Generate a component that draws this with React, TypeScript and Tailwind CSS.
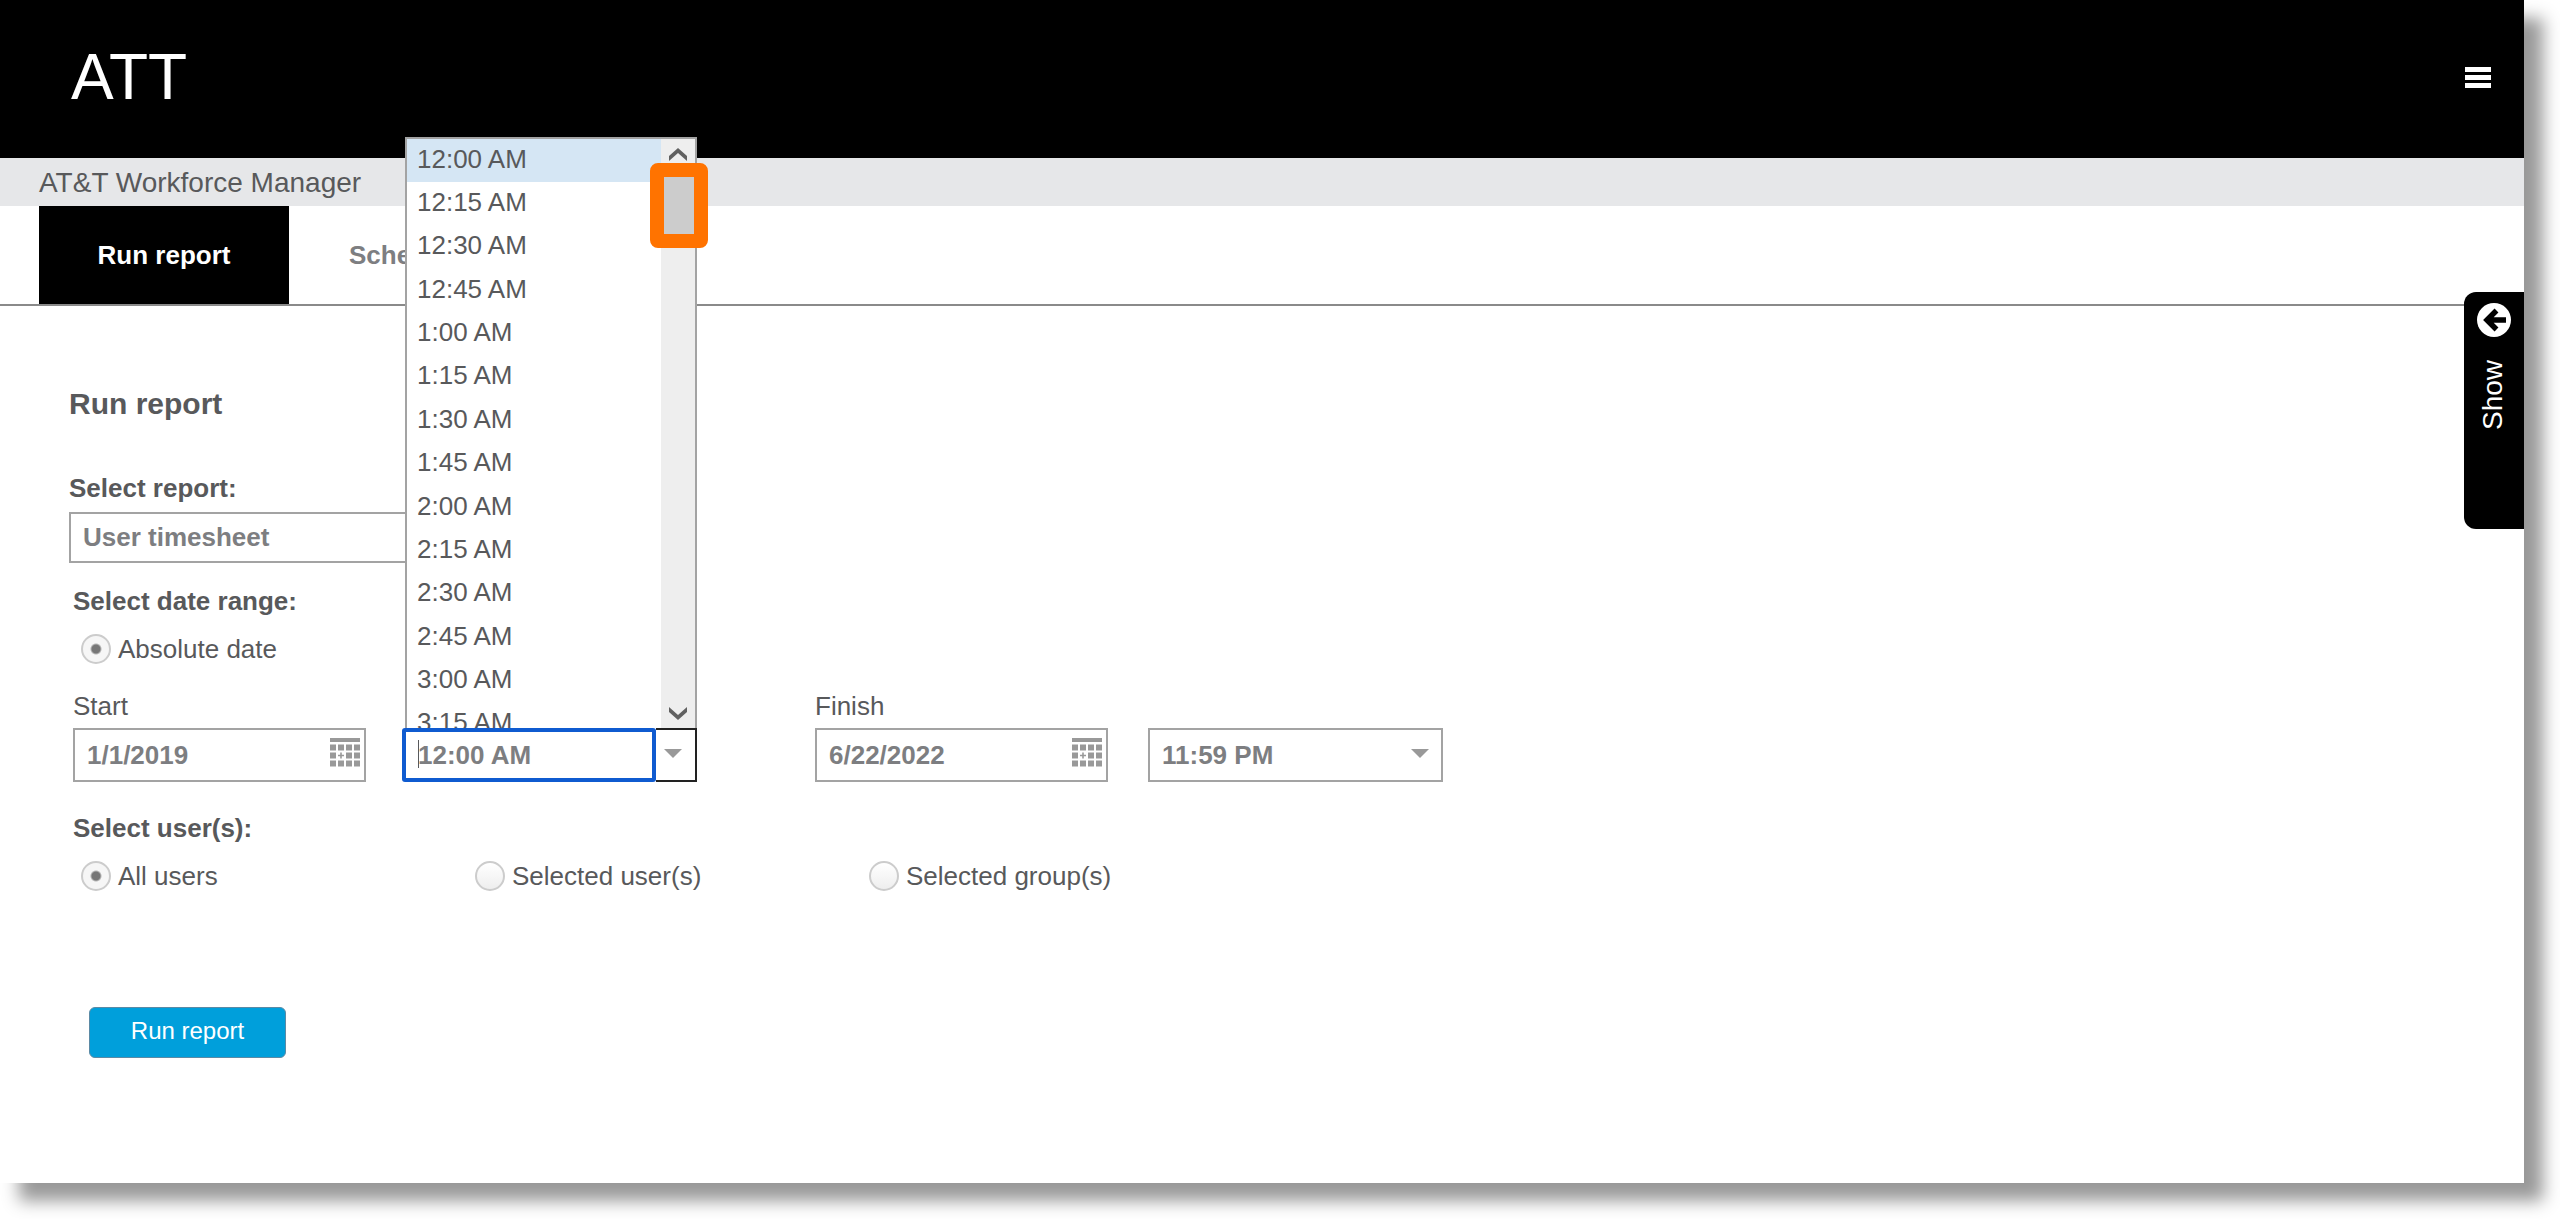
import React from "react";

const times = [
  "12:00 AM", "12:15 AM", "12:30 AM", "12:45 AM",
  "1:00 AM", "1:15 AM", "1:30 AM", "1:45 AM",
  "2:00 AM", "2:15 AM", "2:30 AM", "2:45 AM",
  "3:00 AM", "3:15 AM",
];

function CalendarIcon() {
  const cells = [];
  for (let r = 0; r < 3; r++) {
    for (let c = 0; c < 4; c++) {
      if (r === 1 && c === 1) continue;
      cells.push(<rect key={`${r}-${c}`} x={c * 8} y={6.5 + r * 8} width={6} height={6} />);
    }
  }
  return (
    <svg width="30" height="29" viewBox="0 0 30 29" fill="#999999" aria-hidden="true">
      <rect x="0" y="0" width="30" height="4" />
      {cells}
      <path d="M10.2 14.5h1.6v2.2H14v1.6h-2.2v2.2h-1.6v-2.2H8v-1.6h2.2z" />
    </svg>
  );
}

function Caret() {
  return (
    <svg width="18" height="9" viewBox="0 0 18 9" fill="#999999" aria-hidden="true">
      <path d="M0 0h18L9 9z" />
    </svg>
  );
}

function Chevron({ down = false }: { down?: boolean }) {
  return (
    <svg width="18" height="13" viewBox="0 0 18 13" fill="#606060" aria-hidden="true">
      <path d={down ? "M0 0l9 8 9-8v5l-9 8-9-8z" : "M0 13l9-8 9 8V8L9 0 0 8z"} />
    </svg>
  );
}

function DateField({ id, label, value }: { id: string; label: string; value: string }) {
  return (
    <div className="w-[293px]">
      <label htmlFor={id} className="block h-[38px] leading-8">{label}</label>
      <div className="flex h-[54px] items-center border-2 border-[#a3a3a3] bg-white pr-1">
        <input id={id} defaultValue={value} className="min-w-0 flex-1 pl-3 font-bold text-[#7d7e81] outline-none" />
        <button type="button" aria-label={`Choose ${label.toLowerCase()} date`} className="pb-[6px]">
          <CalendarIcon />
        </button>
      </div>
    </div>
  );
}

function Radio({ name, label, checked = false }: { name: string; label: string; checked?: boolean }) {
  return (
    <label className="flex w-[394px] items-center gap-[7px] leading-8">
      <input
        type="radio"
        name={name}
        defaultChecked={checked}
        className="size-[30px] appearance-none rounded-full border-2 border-[#cccccc] bg-linear-to-b from-white to-[#eeeeee] checked:bg-[radial-gradient(circle,#777777_0,#777777_4px,#f6f6f6_6px)]"
      />
      {label}
    </label>
  );
}

function TimeList() {
  return (
    <div className="absolute bottom-full left-[3px] z-10 flex h-[591px] w-[292px] overflow-hidden border-x-2 border-t-2 border-[#a3a3a3] bg-white">
      <ul role="listbox" aria-label="Start time options" className="flex h-[607px] flex-1 flex-col">
        {times.map((t, i) => (
          <li
            key={t}
            role="option"
            aria-selected={i === 0}
            className="flex flex-1 items-center pb-[3px] pl-[10px] aria-selected:bg-[#d5e6f4]"
          >
            {t}
          </li>
        ))}
      </ul>
      <div className="flex w-[34px] flex-col items-center justify-between bg-[#eeeeee] pt-[9px] pb-2">
        <Chevron />
        <Chevron down />
      </div>
    </div>
  );
}

export default function App() {
  return (
    <div className="h-screen overflow-hidden bg-white font-['Liberation_Sans',Arial,sans-serif] text-[26px] text-[#58595b]">
      <div className="relative mr-9 min-h-[calc(100vh-36px)] bg-white shadow-[19px_18px_16px_#999999]">
        <header className="flex h-[158px] items-center justify-between bg-black pr-[33px] pb-1 pl-[71px] text-white">
          <h1 className="text-[64px] leading-[72px]">ATT</h1>
          <button type="button" aria-label="Menu" className="flex w-[26px] flex-col gap-[3px]">
            <span className="h-[5px] bg-white" />
            <span className="h-[5px] bg-white" />
            <span className="h-[5px] bg-white" />
          </button>
        </header>
        <div className="flex h-12 items-center bg-[#e6e7e9] pt-[2px] pl-[39px] text-[28px]">AT&amp;T Workforce Manager</div>
        <nav className="flex h-[100px] border-b-2 border-[#8a8a8a] pl-[39px] font-bold">
          <button type="button" className="w-[250px] bg-black text-white">Run report</button>
          <button type="button" className="pl-[60px] text-[#7d7e81]">Schedule report</button>
        </nav>

        <aside className="absolute top-[292px] right-0 h-[237px] w-[60px]">
          <button type="button" className="flex h-full w-full flex-col items-center gap-[23px] rounded-l-xl bg-black pt-[11px] text-[28px] text-white">
            <svg width="34" height="34" viewBox="0 0 34 34" aria-hidden="true">
              <circle cx="17" cy="17" r="17" fill="white" />
              <path d="M29 17H11M19.500 7.500L10 17l9.500 9.500" fill="none" stroke="black" strokeWidth="5.500" />
            </svg>
            <span className="mr-[3px] rotate-180 leading-8 [writing-mode:vertical-rl]">Show</span>
          </button>
        </aside>

        <form className="pl-[73px]" onSubmit={(e) => e.preventDefault()}>
          <div className="-ml-1 pt-[78px]">
            <h2 className="text-[30px] leading-10 font-bold">Run report</h2>
            <label htmlFor="report" className="mt-12 block leading-8 font-bold">Select report:</label>
            <input
              id="report"
              defaultValue="User timesheet"
              className="mt-2 h-[51px] w-[500px] border-2 border-[#a3a3a3] pl-3 font-bold text-[#7d7e81] outline-none"
            />
          </div>
          <fieldset className="mt-[22px]">
            <legend className="leading-8 font-bold">Select date range:</legend>
            <div className="mt-4 pl-2">
              <Radio name="range" label="Absolute date" checked />
            </div>
          </fieldset>
          <div className="mt-[25px] flex items-end">
            <DateField id="start-date" label="Start" value="1/1/2019" />
            <div className="relative mr-[118px] ml-9 flex h-[54px] w-[295px]">
              <TimeList />
              <input
                aria-label="Start time"
                defaultValue="12:00 AM"
                className="w-[254px] rounded-[3px] bg-white pl-4 font-bold text-[#7d7e81] outline-none ring-4 ring-[#0f5bd0] ring-inset"
              />
              <span className="absolute top-3 left-4 h-7 w-px bg-[#58595b]" />
              <button type="button" aria-label="Open start times" className="flex flex-1 items-center border-y-2 border-r-2 border-[#222222] bg-white pb-1 pl-2">
                <Caret />
              </button>
              <span className="pointer-events-none absolute -top-[565px] left-[248px] z-20 h-[85px] w-[58px] rounded-lg border-[14px] border-[#ff7300] bg-[#cccccc]" />
            </div>
            <DateField id="finish-date" label="Finish" value="6/22/2022" />
            <div className="ml-10 flex h-[54px] w-[295px] items-center border-2 border-[#a3a3a3] pr-3">
              <input aria-label="Finish time" defaultValue="11:59 PM" className="min-w-0 flex-1 pl-3 font-bold text-[#7d7e81] outline-none" />
              <button type="button" aria-label="Open finish times" className="pb-1">
                <Caret />
              </button>
            </div>
          </div>
          <fieldset className="mt-[30px]">
            <legend className="leading-8 font-bold">Select user(s):</legend>
            <div className="mt-4 flex pl-2">
              <Radio name="users" label="All users" checked />
              <Radio name="users" label="Selected user(s)" />
              <Radio name="users" label="Selected group(s)" />
            </div>
          </fieldset>
          <button type="submit" className="mt-[115px] ml-4 h-[51px] w-[197px] rounded-md border border-[#5b8aa5] bg-[#009fdb] pb-1 text-2xl text-white">
            Run report
          </button>
        </form>
      </div>
    </div>
  );
}
